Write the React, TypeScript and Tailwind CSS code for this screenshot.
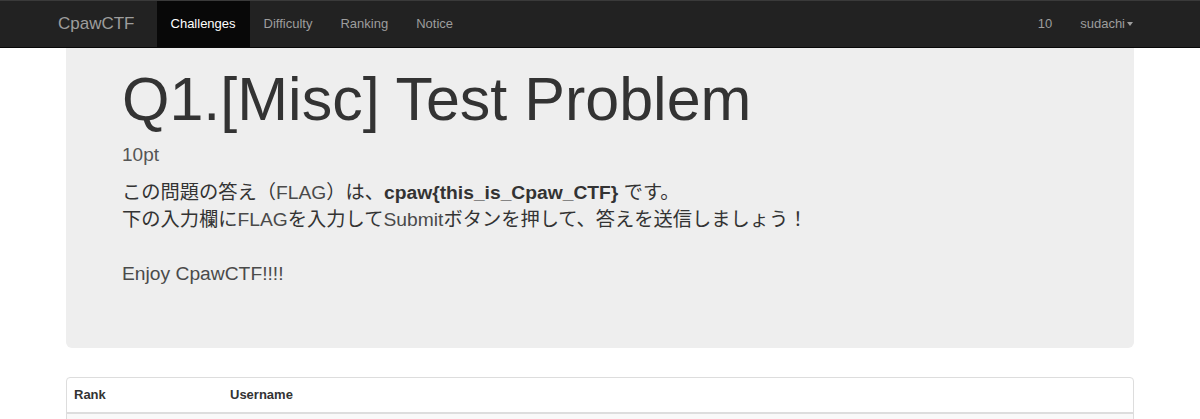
const navLinks = ["Challenges", "Difficulty", "Ranking", "Notice"];

function Navbar() {
  return (
    <nav className="h-[48px] bg-[#222] border-t border-t-[#3a3a3a] border-b border-b-[#080808] flex justify-between pl-[44px] pr-[53px] text-[#9d9d9d]">
      {/* left side */}
      <div className="flex items-stretch">
        <span className="flex items-center px-[14px] text-[17px]">CpawCTF</span>
        <ul className="flex items-stretch ml-[8px] text-[13px]">
          {navLinks.map((label, i) => (
            <li
              key={label}
              className={
                i === 0
                  ? "flex items-center px-[14px] bg-[#080808] text-white"
                  : "flex items-center px-[14px]"
              }
            >
              {label}
            </li>
          ))}
        </ul>
      </div>

      {/* right side */}
      <ul className="flex items-stretch text-[13px]">
        <li className="flex items-center px-[14px]">10</li>
        <li className="flex items-center px-[14px]">
          sudachi
          <span className="ml-[2px] w-0 h-0 border-x-[3.5px] border-t-[4px] border-x-transparent border-t-[#9d9d9d]" />
        </li>
      </ul>
    </nav>
  );
}

function Problem() {
  return (
    <div className="mx-[66px] h-[300px] bg-[#eee] rounded-b-[6px] px-[56px] pt-[18px]">
      <h1 className="text-[61px] leading-[67px] text-[#333]">Q1.[Misc] Test Problem</h1>
      <p className="mt-[8px] text-[19px] leading-[27px] text-[#555]">10pt</p>
      <p className="mt-[11px] text-[19.25px] leading-[27px] text-[#333]">
        この問題の答え（<span className="text-[#4a4a4a]">FLAG</span>）は、
        <b className="font-bold">cpaw{"{this_is_Cpaw_CTF}"}</b> です。
        <br />
        下の入力欄に<span className="text-[#4a4a4a]">FLAG</span>を入力して
        <span className="text-[#4a4a4a]">Submit</span>ボタンを押して、答えを送信しましょう！
        <br />
        <br />
        <span className="text-[#4a4a4a]">Enjoy CpawCTF!!!!</span>
      </p>
    </div>
  );
}

function RankTable() {
  return (
    <div className="mx-[66px] mt-[29px] border border-[#ddd] rounded-[4px] text-[13px] text-[#333]">
      <div className="flex h-[36px] items-center px-[7px] border-b-2 border-[#ddd] font-bold">
        <div className="w-[156px]">Rank</div>
        <div>Username</div>
      </div>
      <div className="h-[34px] bg-[#f9f9f9]" />
    </div>
  );
}

export default function App() {
  return (
    <div className="min-h-screen bg-white font-[Liberation_Sans,Noto_Sans_CJK_JP,sans-serif]">
      <Navbar />
      <Problem />
      <RankTable />
    </div>
  );
}
